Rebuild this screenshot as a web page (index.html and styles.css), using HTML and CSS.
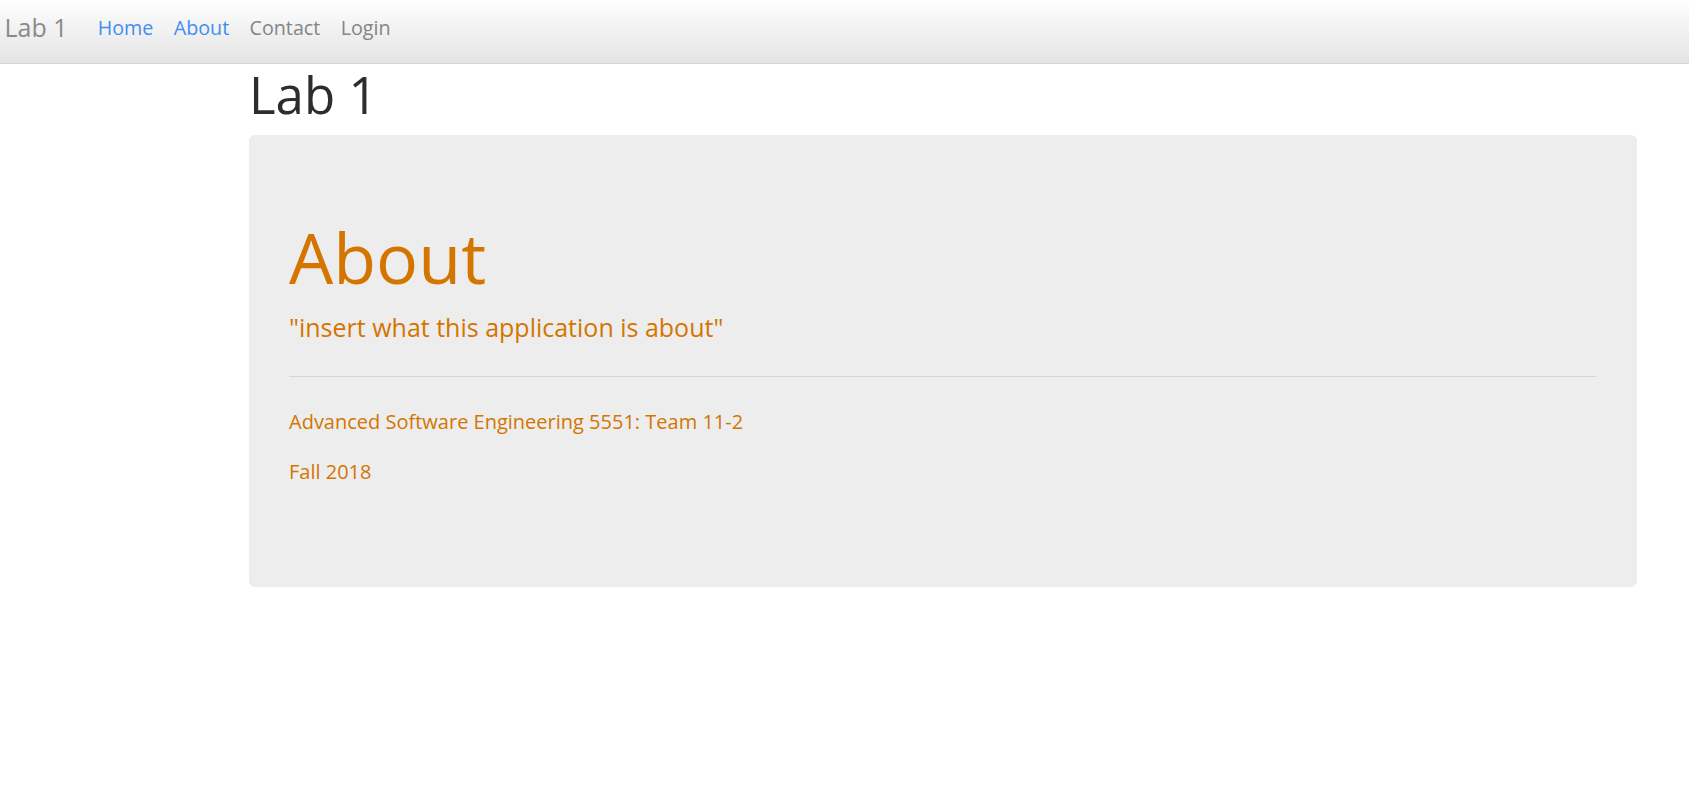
FILE: index.html
```html
<!DOCTYPE html>
<html lang="en">
<head>
<meta charset="utf-8">
<title>Lab 1</title>
<link rel="stylesheet" href="styles.css">
</head>
<body>
<nav class="navbar">
  <a class="brand" href="#">Lab 1</a>
  <ul class="nav">
    <li><a class="nav-link active" href="#">Home</a></li>
    <li><a class="nav-link active" href="#">About</a></li>
    <li><a class="nav-link" href="#">Contact</a></li>
    <li><a class="nav-link" href="#">Login</a></li>
  </ul>
</nav>
<main class="main">
  <h1 class="page-title">Lab 1</h1>
  <section class="jumbotron">
    <h1 class="jumbo-title">About</h1>
    <p class="lead">"insert what this application is about"</p>
    <hr class="divider">
    <p class="info">Advanced Software Engineering 5551: Team 11-2</p>
    <p class="info info-last">Fall 2018</p>
  </section>
</main>
</body>
</html>
```
FILE: styles.css
```css
html, body {
  margin: 0;
  padding: 0;
  background: #ffffff;
}
body {
  font-family: "Open Sans", "Noto Sans", sans-serif;
  color: #333333;
}
.navbar {
  display: flex;
  align-items: flex-start;
  height: 63px;
  padding-left: 4.5px;
  background: linear-gradient(to bottom, #ffffff 0%, #f2f2f2 45%, #e4e4e4 100%);
  border-bottom: 1px solid #d3d3d3;
  box-sizing: content-box;
}
.brand {
  margin-top: 12px;
  margin-right: 20px;
  font-size: 25px;
  line-height: 30px;
  color: #8a8a8a;
  text-decoration: none;
}
.nav {
  display: flex;
  list-style: none;
  margin: 15.5px 0 0 0;
  padding: 0;
}
.nav-link {
  display: block;
  padding: 0 10.2px;
  font-size: 19.7px;
  line-height: 24px;
  color: #858585;
  text-decoration: none;
}
.nav-link.active {
  color: #3f8ef2;
}
.main {
  margin: 0 52px 0 249px;
}
.page-title {
  margin: 2px 0 13px 0;
  font-size: 51px;
  line-height: 56px;
  font-weight: 400;
  color: #2d2d2d;
}
.jumbotron {
  background: #ededed;
  border-radius: 6px;
  padding: 83px 41px 100.5px 40px;
  color: #d47500;
}
.jumbo-title {
  margin: 0;
  font-size: 70px;
  line-height: 78px;
  font-weight: 400;
}
.lead {
  margin: 14px 0 0 0;
  font-size: 25px;
  line-height: 34px;
}
.divider {
  margin: 32px 0 0 0;
  border: 0;
  border-top: 1px solid #d5d5d5;
  height: 0;
}
.info {
  margin: 29.5px 0 0 0;
  font-size: 20px;
  line-height: 30px;
}
.info-last {
  margin-top: 20px;
}
```
